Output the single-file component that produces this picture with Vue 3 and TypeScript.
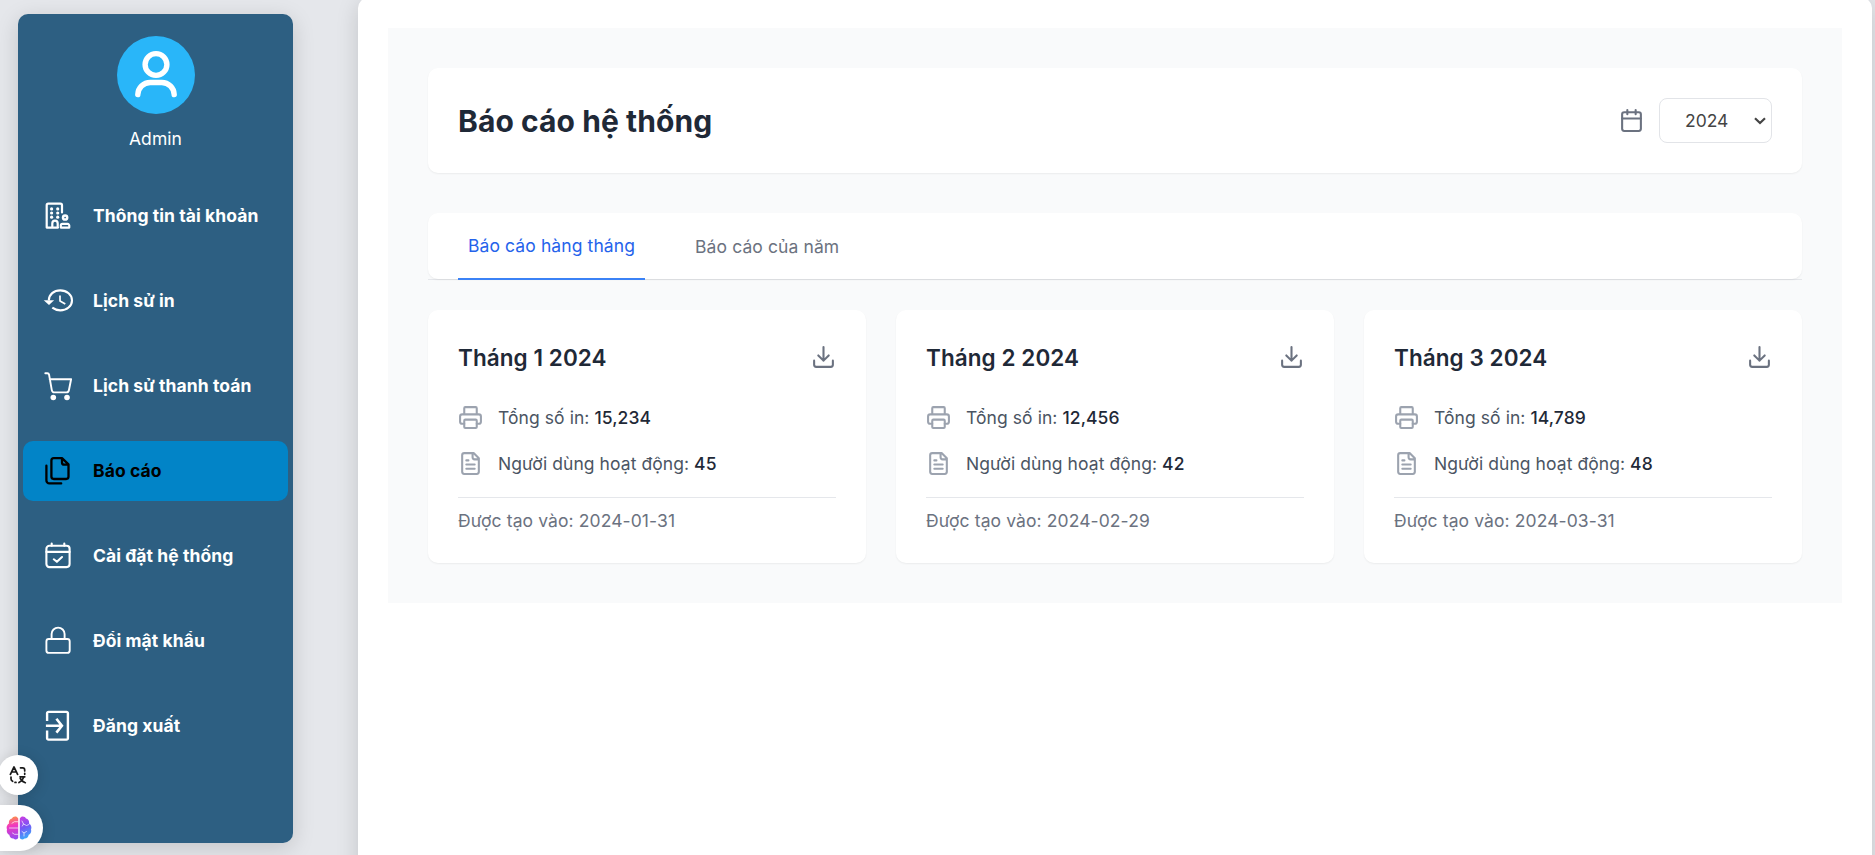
<script setup lang="ts">
import { ref } from 'vue'

interface MenuItem {
  label: string
  icon: string
  active?: boolean
}
interface Report {
  title: string
  prints: string
  users: number
  created: string
}

const menu: MenuItem[] = [
  { label: 'Thông tin tài khoản', icon: 'building' },
  { label: 'Lịch sử in', icon: 'history' },
  { label: 'Lịch sử thanh toán', icon: 'cart' },
  { label: 'Báo cáo', icon: 'files', active: true },
  { label: 'Cài đặt hệ thống', icon: 'calendar' },
  { label: 'Đổi mật khẩu', icon: 'lock' },
  { label: 'Đăng xuất', icon: 'exit' },
]

const reports: Report[] = [
  { title: 'Tháng 1 2024', prints: '15,234', users: 45, created: '2024-01-31' },
  { title: 'Tháng 2 2024', prints: '12,456', users: 42, created: '2024-02-29' },
  { title: 'Tháng 3 2024', prints: '14,789', users: 48, created: '2024-03-31' },
]

const tabs = ['Báo cáo hàng tháng', 'Báo cáo của năm']
const activeTab = ref(0)
const year = ref('2024')
</script>

<template>
  <div class="page">
    <aside class="sidebar">
      <div class="profile">
        <div class="avatar">
          <svg width="78" height="78" viewBox="0 0 78 78" fill="none" stroke="#fff" stroke-width="5.4" stroke-linecap="round">
            <circle cx="39" cy="28.500" r="10.900" />
            <path d="M20.800 58.600A12.400 12.400 0 0 1 33.200 46.500h11.600A12.400 12.400 0 0 1 57.200 58.600" />
          </svg>
        </div>
        <div class="name">Admin</div>
      </div>
      <nav class="menu">
        <a v-for="item in menu" :key="item.icon" class="item" :class="{ active: item.active }">
          <svg class="item-icon" width="30" height="30" viewBox="0 0 30 30" fill="none" stroke="currentColor" stroke-width="2.1" stroke-linecap="round" stroke-linejoin="round">
            <template v-if="item.icon === 'building'">
              <path d="M15 26.600H3.700V4.200a1.500 1.500 0 0 1 1.500-1.500h12.300a1.500 1.500 0 0 1 1.500 1.500V11.500M9.300 26.600v-4.200a2.700 2.700 0 0 1 5.400 0V26.600" stroke-width="2.200" />
              <g fill="currentColor" stroke="none">
                <circle cx="8.600" cy="7.900" r="1.600" /><circle cx="14.700" cy="7.900" r="1.600" />
                <circle cx="8.600" cy="12" r="1.600" /><circle cx="14.700" cy="12" r="1.600" />
                <circle cx="8.600" cy="16.200" r="1.600" /><circle cx="14.700" cy="16.200" r="1.600" />
              </g>
              <circle cx="22.100" cy="16.500" r="2.100" stroke-width="2.500" />
              <path d="M19.400 22.900h5.200a1.700 1.700 0 0 1 1.700 1.700V26.600H17.800v-2.100A1.600 1.600 0 0 1 19.400 22.900z" />
            </template>
            <template v-else-if="item.icon === 'history'">
              <path d="M5.800 14.400C6 8.400 10.800 4.400 17.300 4.400S29 8.800 29 14.400s-5.300 10-11.700 10c-3 0-5.800-1-8-2.700" stroke-linecap="butt" />
              <path d="M17 9.400v5.600l5.300 3" stroke-width="1.700" stroke-linecap="butt" />
              <path d="M.7 14.300h10.400L6 19.100z" fill="currentColor" stroke="none" />
            </template>
            <template v-else-if="item.icon === 'cart'">
              <path d="M2.300 2.200h2c1 0 1.600.6 1.800 1.600l2.700 15.300c.3 1.600 1.200 2.300 2.600 2.300h12c1.400 0 2.200-.7 2.500-2.100l2.200-11H6.700" stroke-width="1.900" />
              <circle cx="10.300" cy="26.500" r="2.800" fill="currentColor" stroke="none" />
              <circle cx="24" cy="26.500" r="2.800" fill="currentColor" stroke="none" />
            </template>
            <template v-else-if="item.icon === 'files'">
              <path d="M19 2.200h-8.200a2.400 2.400 0 0 0-2.400 2.400v16a2.400 2.400 0 0 0 2.400 2.400h12.300a2.400 2.400 0 0 0 2.400-2.400V8.300zM19 2.500v4a2.200 2.200 0 0 0 2.200 2.200h4" stroke-width="2.300" />
              <path d="M3.400 9.700v14.600a3 3 0 0 0 3 3.100h11.800" stroke-width="2.300" />
            </template>
            <template v-else-if="item.icon === 'calendar'">
              <rect x="3.400" y="4.800" width="23.200" height="21.300" rx="3" />
              <path d="M3.400 10.900h23.200M8.700 4.800V2.600M21.300 4.800V2.600M10.800 18.300l3.100 2.500 5.100-4.800" />
            </template>
            <template v-else-if="item.icon === 'lock'">
              <rect x="3.400" y="13" width="23.300" height="13.900" rx="2.400" stroke-width="1.900" />
              <path d="M8.600 13V8.100a6.500 6.500 0 0 1 13 0V13" stroke-width="1.900" />
            </template>
            <template v-else>
              <path d="M4.100 10V2.300a1.400 1.400 0 0 1 1.400-1.400h18A1.400 1.400 0 0 1 24.900 2.300v24.900a1.400 1.400 0 0 1-1.400 1.400h-18A1.400 1.400 0 0 1 4.100 27.200v-7.700" stroke-width="2.400" stroke-linecap="butt" />
              <path d="M2.900 14.700h15.900M13.400 7.800l5.500 6.900-5.500 6.900" stroke-width="2.600" stroke-linecap="butt" stroke-linejoin="miter" />
            </template>
          </svg>
          <span>{{ item.label }}</span>
        </a>
      </nav>
    </aside>

    <main class="panel">
      <div class="content">
        <header class="header card">
          <h1>Báo cáo hệ thống</h1>
          <div class="year">
            <svg class="lucide" viewBox="0 0 24 24">
              <path d="M8 2v4M16 2v4M3 10h18" />
              <rect x="3" y="4" width="18" height="18" rx="2" />
            </svg>
            <div class="select">
              <select v-model="year">
                <option value="2024">2024</option>
                <option value="2023">2023</option>
              </select>
              <svg class="chevron" width="12" height="8" viewBox="0 0 12 8" fill="none" stroke="#444" stroke-width="2.200">
                <path d="M1 1.200l5 4.800 5-4.800" />
              </svg>
            </div>
          </div>
        </header>

        <div class="tab-bar">
          <div class="tabs card">
            <button v-for="(tab, i) in tabs" :key="tab" class="tab" :class="{ active: i === activeTab }" @click="activeTab = i">
              {{ tab }}
            </button>
          </div>
        </div>

        <section class="grid">
          <article v-for="r in reports" :key="r.title" class="report card">
            <div class="report-head">
              <h2>{{ r.title }}</h2>
              <svg class="lucide" viewBox="0 0 24 24">
                <path d="M21 15v4a2 2 0 0 1-2 2H5a2 2 0 0 1-2-2v-4M7 10l5 5 5-5M12 15V2" />
              </svg>
            </div>
            <div class="row">
              <svg class="lucide light" viewBox="0 0 24 24">
                <path d="M6 18H4a2 2 0 0 1-2-2v-5a2 2 0 0 1 2-2h16a2 2 0 0 1 2 2v5a2 2 0 0 1-2 2h-2M6 9V3a1 1 0 0 1 1-1h10a1 1 0 0 1 1 1v6" />
                <rect x="6" y="14" width="12" height="8" rx="1" />
              </svg>
              <span>Tổng số in: <b>{{ r.prints }}</b></span>
            </div>
            <div class="row">
              <svg class="lucide light" viewBox="0 0 24 24">
                <path d="M15 2H6a2 2 0 0 0-2 2v16a2 2 0 0 0 2 2h12a2 2 0 0 0 2-2V7zM14 2v4a2 2 0 0 0 2 2h4M10 9H8M16 13H8M16 17H8" />
              </svg>
              <span>Người dùng hoạt động: <b>{{ r.users }}</b></span>
            </div>
            <div class="created">Được tạo vào: {{ r.created }}</div>
          </article>
        </section>
      </div>
    </main>

    <div class="float translate">
      <svg width="18" height="18" viewBox="0 0 18 18" fill="none" stroke="#1a1a1a" stroke-width="1.700" stroke-linecap="round" stroke-linejoin="round">
        <path d="M1.400 8.300L5 1l3.600 7.300M2.700 6h4.700M11.500 1.800h2.200c1.500 0 2 .8 2 2.200v1M15.700 7.300v1M2 11v1.800c0 1.200.5 2 1.600 2.500M6 16.400h1M11 10.800h4.800M14.800 11c-.8 2.500-2.500 4.500-4.800 5.600M11.300 12.500c1 2 2.700 3.600 5 4.200" />
      </svg>
    </div>
    <div class="float brain">
      <svg width="26" height="24" viewBox="0 0 26 24" fill="none">
        <defs>
          <linearGradient id="lobeLeft" x1="5" y1="0" x2="10" y2="24" gradientUnits="userSpaceOnUse">
            <stop offset="0" stop-color="#ff9a3d" />
            <stop offset=".4" stop-color="#f137c0" />
            <stop offset="1" stop-color="#8b4df5" />
          </linearGradient>
          <linearGradient id="lobeRight" x1="14" y1="0" x2="24" y2="22" gradientUnits="userSpaceOnUse">
            <stop offset="0" stop-color="#d43be0" />
            <stop offset=".5" stop-color="#7556f6" />
            <stop offset="1" stop-color="#35b4fb" />
          </linearGradient>
        </defs>
        <path d="M12.200 2.500C11-.4 6.800-.1 6 2.600 3.500 3.300 2.500 5.400 3 7.500.6 9 .2 11.600 1 13.400c-.7 2.500.4 4.500 2.300 5.300.3 2.500 2 4 4.200 3.800 1.600 1.700 4 1.200 4.700-.7z" fill="url(#lobeLeft)" />
        <path d="M13.800 2.500C15-.4 19.200-.1 20 2.600c2.500.7 3.500 2.800 3 4.900 2.400 1.500 2.800 4.100 2 5.900.7 2.500-.4 4.500-2.300 5.300-.3 2.500-2 4-4.200 3.800-1.600 1.700-4 1.200-4.700-.7z" fill="url(#lobeRight)" />
        <path d="M6 7.200l2.500-1.500h3.500M3.500 12h8.500M6.500 17l2 1.300H12M16 5l1.500 3-1.200 2M17.500 8l3 1.500L23 8.500M16 15.500l2 1.500 2.500-1.500M18 17v3" stroke="#fff" stroke-opacity=".75" stroke-width=".9" stroke-linecap="round" />
      </svg>
    </div>
  </div>
</template>

<style>
body {
  margin: 0;
  overflow: hidden;
}
</style>

<style scoped>
* {
  box-sizing: border-box;
}
.page {
  width: 100vw;
  height: 100vh;
  display: flex;
  gap: 65px;
  padding-left: 18px;
  padding-right: 3px;
  overflow: hidden;
  background: #e5e7eb;
  font-family: Inter, 'Liberation Sans', sans-serif;
  font-size: 17.5px;
  line-height: 27px;
  letter-spacing: 0.07px;
}
.sidebar {
  flex: none;
  width: 275px;
  height: 829px;
  margin-top: 14px;
  padding: 22px 5px 0;
  border-radius: 10px;
  background: #2d5f82;
  box-shadow: 0 5px 22px rgba(0, 0, 0, 0.15);
  color: #fff;
}
.profile {
  display: flex;
  flex-direction: column;
  align-items: center;
}
.avatar {
  width: 78px;
  height: 78px;
  border-radius: 50%;
  background: #29b6f9;
}
.avatar svg {
  display: block;
}
.name {
  margin-top: 11px;
}
.menu {
  display: flex;
  flex-direction: column;
  gap: 25px;
  margin-top: 34px;
}
.item {
  display: flex;
  align-items: center;
  gap: 20px;
  height: 60px;
  padding-left: 20px;
  border-radius: 10px;
  font-weight: 700;
  white-space: nowrap;
}
.item span {
  padding-bottom: 2px;
}
.item.active {
  background: #0284c7;
  color: #000;
}
.item-icon {
  overflow: visible;
}
.panel {
  flex: 1;
  height: 900px;
  margin-top: -2px;
  padding: 30px;
  border-radius: 10px;
  background: #fff;
  box-shadow: 0 5px 22px rgba(0, 0, 0, 0.15);
}
.content {
  padding: 40px;
  background: #f9fafb;
}
.card {
  border-radius: 10px;
  background: #fff;
  box-shadow: 0 1px 2px rgba(0, 0, 0, 0.06);
}
.header {
  display: flex;
  align-items: center;
  justify-content: space-between;
  height: 105px;
  padding: 0 30px;
}
h1 {
  margin: 0;
  padding-top: 2px;
  font-size: 30px;
  font-weight: 700;
  color: #1f2937;
}
.year {
  display: flex;
  align-items: center;
  gap: 15px;
}
.lucide {
  flex: none;
  width: 25px;
  height: 25px;
  fill: none;
  stroke: #6b7280;
  stroke-width: 2;
  stroke-linecap: round;
  stroke-linejoin: round;
}
.lucide.light {
  stroke: #9ca3af;
}
.select {
  position: relative;
}
select {
  display: block;
  appearance: none;
  width: 113px;
  height: 45px;
  padding: 0 0 0 25px;
  border: 1px solid #e2e4e8;
  border-radius: 8px;
  background: #fff;
  color: #444;
  font: inherit;
}
.chevron {
  position: absolute;
  top: 19px;
  right: 6px;
  pointer-events: none;
}
.tab-bar {
  margin-top: 40px;
  border-bottom: 1px solid #e5e7eb;
}
.tabs {
  display: flex;
  gap: 40px;
  height: 66px;
  padding: 0 30px;
}
.tab {
  height: 67px;
  padding: 0 10px;
  border: 0;
  background: none;
  color: #6b7280;
  font: inherit;
  letter-spacing: 0.1px;
}
.tab.active {
  border-bottom: 2px solid #3b82f6;
  color: #2563eb;
}
.grid {
  display: grid;
  grid-template-columns: repeat(3, 1fr);
  gap: 30px;
  margin-top: 30px;
}
.report {
  height: 253px;
  padding: 30px;
}
.report-head {
  display: flex;
  align-items: center;
  justify-content: space-between;
  height: 35px;
  margin-bottom: 25px;
}
h2 {
  margin: 0;
  font-size: 22.5px;
  font-weight: 600;
  color: #1f2937;
}
.row {
  display: flex;
  align-items: center;
  gap: 15px;
  height: 35px;
  margin-bottom: 11px;
  color: #4b5563;
}
.row b {
  font-weight: 500;
  color: #1f2937;
}
.created {
  margin-top: 16px;
  padding-top: 9px;
  border-top: 1px solid #e5e7eb;
  color: #6b7280;
  letter-spacing: 0.1px;
}
.float {
  position: absolute;
  left: -2px;
  display: flex;
  align-items: center;
  background: #fff;
  box-shadow: 0 2px 14px rgba(0, 0, 0, 0.15);
}
.translate {
  top: 755px;
  width: 40px;
  height: 40px;
  padding-left: 11px;
  border-radius: 50%;
}
.brain {
  top: 805px;
  width: 45px;
  height: 46px;
  padding-left: 8px;
  border-radius: 0 23px 23px 0;
}
</style>
